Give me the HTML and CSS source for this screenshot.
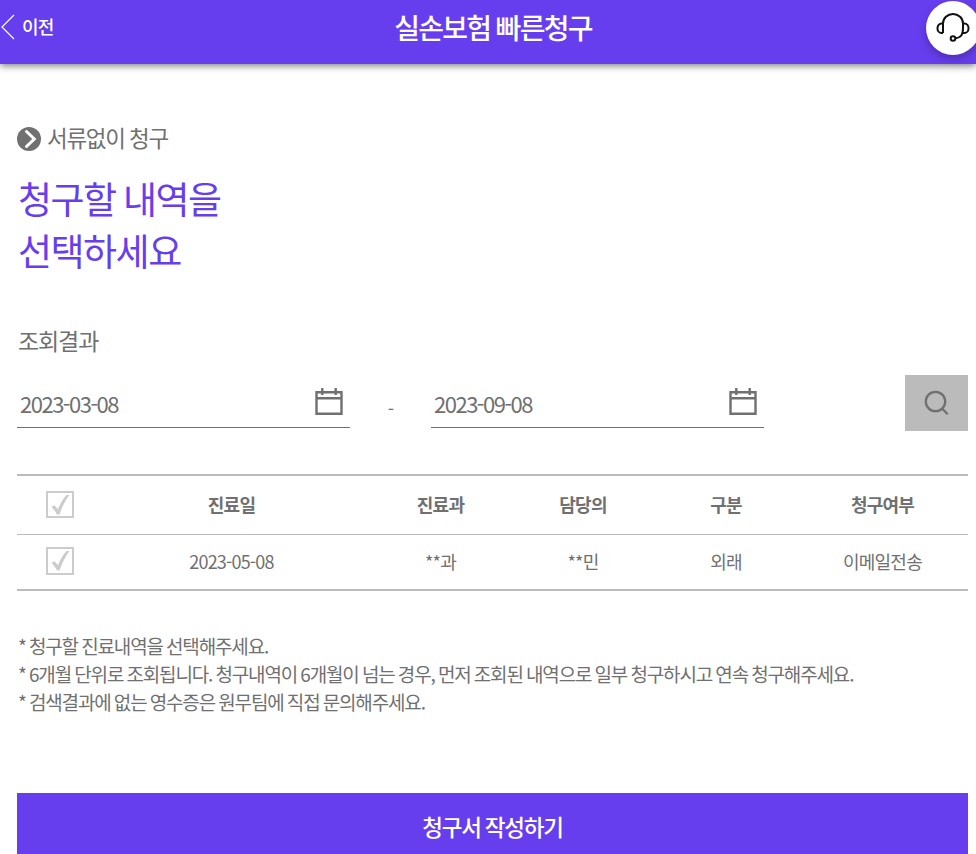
FILE: index.html
```html
<!DOCTYPE html>
<html lang="ko">
<head>
<meta charset="utf-8">
<title>실손보험 빠른청구</title>
<link rel="stylesheet" href="styles.css">
</head>
<body>
<header class="top">
  <a class="back"><svg width="15" height="26" viewBox="0 0 15 26"><path d="M14 1 2 13l12 12" fill="none" stroke="#fff" stroke-width="1.2"/></svg><span>이전</span></a>
  <h1 class="top-title">실손보험 빠른청구</h1>
  <a class="support"><svg width="36" height="32" viewBox="0 0 36 32" fill="none" stroke="#111" stroke-width="2"><path d="M8 21V11.500a10 9.500 0 0 1 20 0V16c0 7-2 9.500-8 10.500M8 11.500H6.500a4 4.500 0 0 0-4 4.500v.5a4 4.500 0 0 0 4 4.500H8M28 11.500h1.500a4 4.500 0 0 1 4 4.500v.5a4 4.500 0 0 1-4 4.500H28"/><circle cx="18" cy="26.500" r="2.300"/></svg></a>
</header>
<main class="page">
  <div class="kind"><svg width="24" height="24" viewBox="0 0 24 24"><circle cx="12" cy="12" r="12" fill="#707070"/><path d="M9.500 4.500l7.800 7.500-7.800 7.500" fill="none" stroke="#fff" stroke-width="3" stroke-linecap="round"/></svg><span>서류없이 청구</span></div>
  <h2 class="heading">청구할 내역을<br>선택하세요</h2>
  <h3 class="sub">조회결과</h3>
  <div class="search">
    <div class="date"><span>2023-03-08</span><svg width="28" height="28" viewBox="0 0 28 28" fill="none" stroke="#707070" stroke-width="2.400"><path d="M1.500 4.300h25v21.500h-25zM1.500 10.300h25M7.300 0v7M20.700 0v7"/></svg></div>
    <span class="dash">-</span>
    <div class="date"><span>2023-09-08</span><svg width="28" height="28" viewBox="0 0 28 28" fill="none" stroke="#707070" stroke-width="2.400"><path d="M1.500 4.300h25v21.500h-25zM1.500 10.300h25M7.300 0v7M20.700 0v7"/></svg></div>
    <button class="find"><svg width="26" height="26" viewBox="0 0 26 26" fill="none" stroke="#707070" stroke-width="2.300"><circle cx="11.500" cy="11.500" r="9.700"/><path d="M18 18.500l5.700 5.700"/></svg></button>
  </div>
  <div class="table">
    <div class="row head"><span class="box"><svg width="24" height="24" viewBox="0 0 24 24"><path d="M3.500 14l3-1.700 3.500 4C12 11 15 5.500 18.500 2h3C17 8 14 14 11.500 21.500H9C7.500 18.500 5.500 16 3.500 14z" fill="#ccc"/></svg></span><span>진료일</span><span>진료과</span><span>담당의</span><span>구분</span><span>청구여부</span></div>
    <div class="row"><span class="box"><svg width="24" height="24" viewBox="0 0 24 24"><path d="M3.500 14l3-1.700 3.500 4C12 11 15 5.500 18.500 2h3C17 8 14 14 11.500 21.500H9C7.500 18.500 5.500 16 3.500 14z" fill="#ccc"/></svg></span><span>2023-05-08</span><span>**과</span><span>**민</span><span>외래</span><span>이메일전송</span></div>
  </div>
  <div class="notes">
    <p>* 청구할 진료내역을 선택해주세요.</p>
    <p>* 6개월 단위로 조회됩니다. 청구내역이 6개월이 넘는 경우, 먼저 조회된 내역으로 일부 청구하시고 연속 청구해주세요.</p>
    <p>* 검색결과에 없는 영수증은 원무팀에 직접 문의해주세요.</p>
  </div>
  <button class="submit">청구서 작성하기</button>
</main>
</body>
</html>
```
FILE: styles.css
```css
* { box-sizing: border-box; margin: 0; padding: 0; }
body { width: 976px; height: 854px; overflow: hidden; background: #fff; color: #707070; font-family: "Noto Sans CJK KR", sans-serif; letter-spacing: -0.05em; }
svg { display: block; flex: none; }
h1, h2, h3 { font-weight: 400; }
.top { height: 64px; background: #673eee; color: #fff; display: grid; grid-template-columns: 200px 1fr 200px; box-shadow: 0 2px 7px rgba(0,0,0,.5); }
.back { display: flex; align-items: center; gap: 7px; height: 54px; font-size: 18px; font-weight: 500; }
.back span { padding-bottom: 2px; }
.top-title { text-align: center; padding-left: 10px; font-size: 28px; line-height: 54px; font-weight: 500; letter-spacing: -1.7px; word-spacing: -1px; }
.support { justify-self: end; width: 54px; height: 54px; margin-top: 1px; margin-right: -4px; border-radius: 50%; background: #fff; display: flex; align-items: center; justify-content: center; box-shadow: 0 4px 8px rgba(0,0,0,.25); }
.page { padding: 60px 8px 0 17px; }
.kind { display: flex; align-items: center; gap: 6px; height: 30px; font-size: 22.5px; line-height: 25px; letter-spacing: -1.3px; word-spacing: -.5px; }
.kind span { padding-bottom: 4px; }
.heading { margin-top: 18px; color: #673eee; font-size: 37px; line-height: 52px; padding-left: 1px; letter-spacing: -1.5px; word-spacing: -1.5px; }
.sub { margin-top: 47px; font-size: 23px; line-height: 34px; height: 34px; padding-left: 1px; letter-spacing: -1.1px; }
.search { display: flex; margin-top: 18px; height: 56px; }
.date { width: 333px; height: 53px; border-bottom: 1px solid #707070; display: flex; justify-content: space-between; align-items: center; padding: 2px 7px 0 3px; font-size: 22px; letter-spacing: -1.5px; }
.date span { padding-top: 1px; }
.dash { width: 81px; text-align: center; font-size: 18px; line-height: 66px; }
.find { margin-left: auto; width: 63px; height: 56px; border: 0; background: #bbb; display: flex; align-items: center; justify-content: center; }
.table { margin-top: 43px; border-top: 2px solid #bbb; border-bottom: 2px solid #bbb; }
.row { display: grid; grid-template-columns: 86px 257px 161px 124px 162px 151px; align-items: center; height: 54px; font-size: 18px; line-height: 26px; text-align: center; padding-bottom: 2px; }
.head { height: 59px; padding-bottom: 1px; border-bottom: 1px solid #bbb; font-weight: 700; }
.head span:not(.box) { padding-bottom: 2px; }
.box { justify-self: center; width: 28px; height: 28px; border: 2px solid #ccc; }
.head .box { height: 27px; }
.notes { margin-top: 41px; font-size: 19px; line-height: 28px; padding-left: 1px; letter-spacing: -1.16px; word-spacing: -.9px; white-space: nowrap; }
.submit { display: block; width: 100%; height: 69px; margin-top: 77px; border: 0; background: #673eee; color: #fff; font: 500 22.5px/67px "Noto Sans CJK KR", sans-serif; letter-spacing: -1.2px; word-spacing: -1px; padding-bottom: 2px; }
```
